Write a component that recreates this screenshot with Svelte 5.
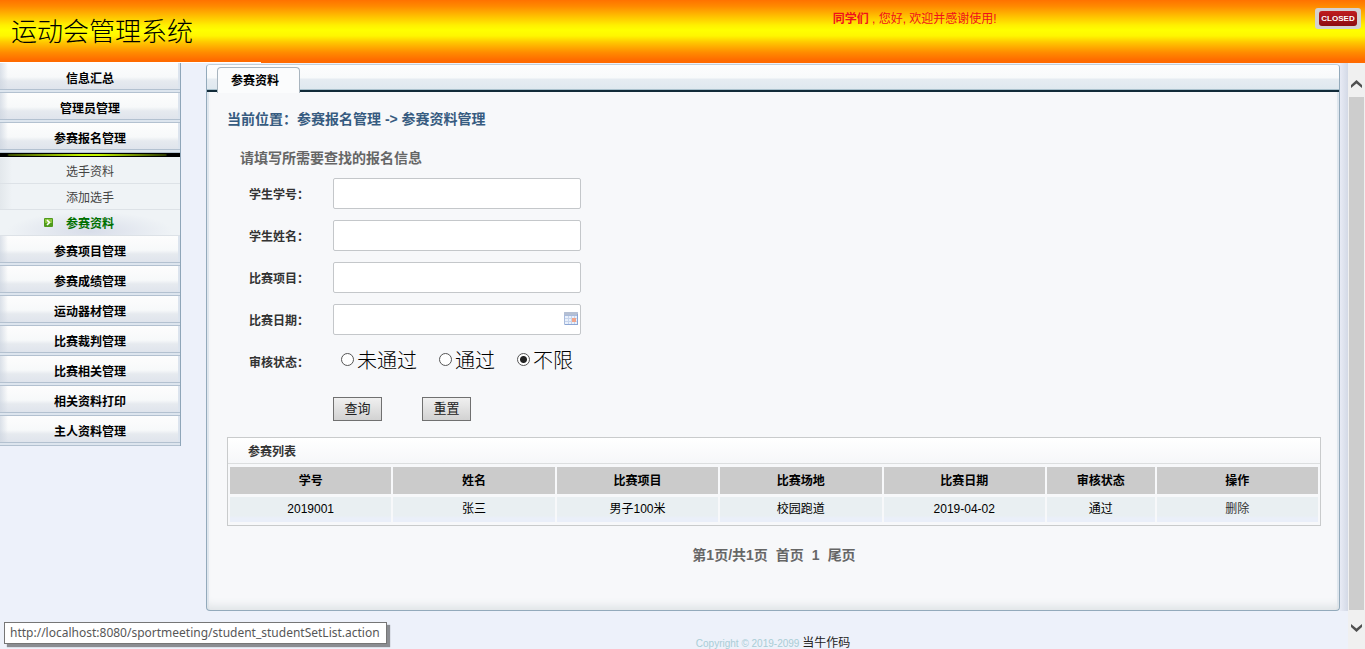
<script lang="ts">
	type MenuItem = { label: string; children?: string[] };

	const menu: MenuItem[] = [
		{ label: '信息汇总' },
		{ label: '管理员管理' },
		{ label: '参赛报名管理', children: ['选手资料', '添加选手', '参赛资料'] },
		{ label: '参赛项目管理' },
		{ label: '参赛成绩管理' },
		{ label: '运动器材管理' },
		{ label: '比赛裁判管理' },
		{ label: '比赛相关管理' },
		{ label: '相关资料打印' },
		{ label: '主人资料管理' }
	];
	const current = '参赛资料';

	const columns = [
		{ label: '学号', width: 15 },
		{ label: '姓名', width: 15 },
		{ label: '比赛项目', width: 15 },
		{ label: '比赛场地', width: 15 },
		{ label: '比赛日期', width: 15 },
		{ label: '审核状态', width: 10 },
		{ label: '操作', width: 15 }
	];
	const rows = [['2019001', '张三', '男子100米', '校园跑道', '2019-04-02', '通过']];

	const states = ['未通过', '通过', '不限'];

	let number = '';
	let name = '';
	let project = '';
	let date = '';
	let state = '不限';

	function reset() {
		number = name = project = date = '';
		state = '不限';
	}
</script>

<div class="page">
	<header>
		<h1>运动会管理系统</h1>
		<p><b>同学们</b> , 您好, 欢迎并感谢使用!</p>
		<button type="button" class="closed"><span>CLOSED</span></button>
	</header>

	<div class="body">
		<nav>
			{#each menu as item}
				<a class="item" href="#menu">{item.label}</a>
				{#if item.children}
					<div class="bar"></div>
					{#each item.children as child}
						<a class="child" class:selected={child === current} href="#menu">
							{#if child === current}
								<svg viewBox="0 0 9 9" width="9" height="9" aria-hidden="true">
									<rect width="9" height="9" rx="1" fill="#4f9a1c" />
									<rect x="1" y="1" width="7" height="4" fill="#8cc63e" />
									<path d="M3 2l2.5 2.5L3 7" fill="none" stroke="#fff" stroke-width="1.6" />
								</svg>
							{/if}
							{child}
						</a>
					{/each}
				{/if}
			{/each}
		</nav>

		<div class="content">
			<main>
				<div class="tabs"><a href="#tab">参赛资料</a></div>
				<div class="inner">
					<h2>当前位置：参赛报名管理 -&gt; 参赛资料管理</h2>
					<form on:submit|preventDefault>
						<h3>请填写所需要查找的报名信息</h3>
						<div class="row">
							<label for="number">学生学号：</label>
							<input type="text" id="number" bind:value={number} />
						</div>
						<div class="row">
							<label for="name">学生姓名：</label>
							<input type="text" id="name" bind:value={name} />
						</div>
						<div class="row">
							<label for="project">比赛项目：</label>
							<input type="text" id="project" bind:value={project} />
						</div>
						<div class="row">
							<label for="date">比赛日期：</label>
							<div class="date">
								<input type="text" id="date" bind:value={date} />
								<svg viewBox="0 0 14 13" width="14" height="13" aria-hidden="true">
									<rect width="14" height="13" rx="1" fill="#a9bbdc" />
									<rect width="14" height="3" rx="1" fill="#b4bfd3" />
									<path d="M1 4h12v8H1z" fill="#e9f0fb" />
									<path d="M1 6.5h12M1 9.5h12M4.5 4v8M7.5 4v8M10.5 4v8" stroke="#c6d4ec" />
									<rect x="8" y="6" width="4" height="4" fill="#f0a58c" />
									<path d="M13.5 2v11M1 12.5h13" stroke="#8ba5d4" />
								</svg>
							</div>
						</div>
						<div class="row" role="radiogroup" aria-labelledby="state">
							<span class="label" id="state">审核状态：</span>
							<div class="radios">
								{#each states as option}
									<label>
										<input type="radio" name="state" value={option} bind:group={state} />
										{option}
									</label>
								{/each}
							</div>
						</div>
						<div class="actions">
							<button type="submit">查询</button>
							<button type="button" on:click={reset}>重置</button>
						</div>
					</form>

					<section class="list">
						<h4>参赛列表</h4>
						<table>
							<thead>
								<tr>
									{#each columns as column}
										<th style={`width: ${column.width}%`}>{column.label}</th>
									{/each}
								</tr>
							</thead>
							<tbody>
								{#each rows as row}
									<tr>
										{#each row as cell}
											<td>{cell}</td>
										{/each}
										<td><a href="#delete">删除</a></td>
									</tr>
								{/each}
							</tbody>
						</table>
					</section>

					<div class="pager">
						<span>第1页/共1页</span>
						<a href="#first">首页</a>
						<a href="#1">1</a>
						<a href="#last">尾页</a>
					</div>
				</div>
			</main>
			<footer>Copyright © 2019-2099 <a href="#home">当牛作码</a></footer>
		</div>

		<div class="scrollbar">
			<button type="button" class="up" aria-label="向上滚动">
				<svg viewBox="0 0 11 8" width="11" height="8"><path d="M0 8V5l5.5-5L11 5v3L5.5 3.500z" /></svg>
			</button>
			<div class="thumb"></div>
			<button type="button" class="down" aria-label="向下滚动">
				<svg viewBox="0 0 11 8" width="11" height="8"><path d="M0 0v3l5.5 5L11 3V0L5.5 4.500z" /></svg>
			</button>
		</div>
	</div>

	<div class="status">http://localhost:8080/sportmeeting/student_studentSetList.action</div>
</div>

<style>
	:global(body) {
		margin: 0;
		background: #edf1fa;
	}
	.page {
		position: relative;
		display: flex;
		flex-direction: column;
		height: 100vh;
		overflow: hidden;
		color: #000;
		font-family: 'Liberation Sans', 'Noto Sans CJK SC', sans-serif;
		font-size: 12px;
	}
	h1,
	h2,
	h3,
	h4,
	p {
		margin: 0;
	}
	a {
		color: inherit;
		text-decoration: none;
	}
	input,
	button {
		box-sizing: border-box;
		margin: 0;
		font-family: inherit;
	}

	header {
		display: flex;
		flex: none;
		align-items: flex-start;
		height: 63px;
		background:
			linear-gradient(#fff, #fff) 0 100% / 261px 1px no-repeat,
			linear-gradient(
				#ff7200 0,
				#ff8a00 10%,
				#ffc400 27%,
				#fff000 40%,
				#ffff00 48%,
				#fff600 57%,
				#ffc800 67%,
				#ff8c00 83%,
				#ff6c00 95%,
				#ff6a00
			);
	}
	h1 {
		box-sizing: border-box;
		flex: 0 0 61%;
		padding: 12px 0 0 11px;
		font-family: KaiTi, 'Noto Sans CJK SC', sans-serif;
		font-size: 26px;
		font-weight: 300;
		line-height: 36px;
	}
	header p {
		flex: 1;
		padding-top: 9px;
		color: #f00f1c;
		line-height: 20px;
	}
	.closed {
		width: 46px;
		height: 21px;
		margin: 8px 4px 0 0;
		padding: 3px 4px;
		border: 0;
		border-radius: 3px;
		background: #d3d1d1;
	}
	.closed span {
		display: block;
		border-radius: 3px;
		background: linear-gradient(#c01c1f, #8c0c10);
		color: #fff;
		font-size: 8px;
		font-weight: 700;
		line-height: 15px;
	}

	.body {
		display: flex;
		flex: 1;
		align-items: flex-start;
		min-height: 0;
	}
	nav {
		flex: none;
		width: 180px;
		border-right: 1px solid #8fa6b9;
		background: #eff3f6;
		text-align: center;
	}
	.item {
		display: block;
		height: 30px;
		background:
			linear-gradient(#b3c1d0, #b3c1d0) 0 26px / 100% 1px no-repeat,
			linear-gradient(#dde5ee, #dde5ee) 0 27px / 100% 2px no-repeat,
			linear-gradient(#b3c1d0, #b3c1d0) 0 29px / 100% 1px no-repeat,
			linear-gradient(#dce4ee, #dce4ee) 100% 0 / 2px 100% no-repeat,
			linear-gradient(90deg, rgba(205, 213, 224, 0.7), transparent 8px),
			linear-gradient(#fdfdfd, #f7f9fa 14px, #e6eaef 18px, #dfe4ec 26px);
		font-weight: 700;
		line-height: 32px;
	}
	.bar {
		box-sizing: border-box;
		height: 4px;
		margin-bottom: 1px;
		border-top: 1px solid #000;
		border-bottom: 1px solid #000;
		background: linear-gradient(90deg, #000 4%, #3b4d00 5%, #c4f500 45%, #c4f500 55%, #2c3a00 92%, #000 93%);
	}
	.child {
		position: relative;
		display: block;
		box-sizing: border-box;
		height: 26px;
		border-bottom: 1px solid #dde2e7;
		background: linear-gradient(90deg, #e3e8ec, #eff3f6 12px);
		color: #444;
		line-height: 28px;
	}
	.child.selected {
		background: radial-gradient(ellipse at 50% 85%, #d8dde9, #eff3f6 65%);
		color: #007000;
		font-weight: 700;
	}
	.child svg {
		position: absolute;
		top: 8px;
		left: 44px;
	}

	.content {
		flex: 1;
		padding: 1px 8px 0 25px;
		background: linear-gradient(90deg, #e8ebf5, #d3d9e6) right 0 top 0 / 8px 548px no-repeat;
	}
	main {
		border: 1px solid #93aabb;
		border-top-color: #c3d0da;
		border-radius: 4px;
		background: #f7f8fa;
		box-shadow: inset 0 -8px 8px -4px #dfe3e6, inset 2px 0 #dfe7ef, inset -2px 0 #dfe7ef;
	}
	.tabs {
		display: flex;
		height: 25px;
		padding: 0 10px;
		border-bottom: 2px solid #122b39;
		border-radius: 3px 3px 0 0;
		background: linear-gradient(#fdfdfe, #f8fafb 13px, #e6ecf2 14px, #dfe8ef 24px, #a9c0cc 24px);
	}
	.tabs a {
		height: 25px;
		margin-top: 2px;
		padding: 0 20px 0 13px;
		border: 1px solid #a9b5bf;
		border-bottom: 0;
		border-radius: 4px 4px 0 0;
		background: #fbfcfd;
		font-weight: 700;
		line-height: 26px;
	}
	.inner {
		padding: 17px 18px 45px 20px;
	}
	h2 {
		color: #365b80;
		font-size: 14px;
		line-height: 20px;
	}
	form {
		padding: 19px 0 16px 13px;
	}
	h3 {
		margin-bottom: 10px;
		color: #666;
		font-size: 14px;
		line-height: 20px;
	}
	.row {
		display: flex;
		align-items: center;
		height: 31px;
		margin-bottom: 11px;
		padding-left: 9px;
	}
	.row > label,
	.label {
		width: 84px;
		color: #333;
		font-weight: 700;
	}
	.row input[type='text'] {
		width: 248px;
		height: 31px;
		padding: 0 8px;
		border: 1px solid #c4c7ca;
		border-radius: 2px;
		background: #fff;
	}
	.date {
		position: relative;
	}
	.date svg {
		position: absolute;
		top: 8px;
		right: 3px;
	}
	.radios {
		display: flex;
		gap: 22px;
		padding: 0 0 4px 8px;
		font-family: SimSun, 'Noto Sans CJK SC', sans-serif;
		font-size: 20px;
		font-weight: 300;
		line-height: 28px;
	}
	.radios label {
		display: flex;
		align-items: center;
		gap: 3px;
	}
	.radios input {
		width: 13px;
		height: 13px;
		border: 1px solid #555;
		border-radius: 50%;
		background: #fff;
		appearance: none;
	}
	.radios input:checked {
		background: radial-gradient(circle, #222 3px, #fff 4px);
	}
	.actions {
		display: flex;
		gap: 40px;
		padding: 9px 0 0 93px;
	}
	.actions button {
		min-width: 49px;
		height: 24px;
		padding: 0 10px;
		border: 1px solid #707070;
		background: linear-gradient(#f0f0f0, #d2d2d2);
		color: #222;
		font-size: 13px;
		line-height: 22px;
	}

	.list {
		border: 1px solid #c9cbcc;
	}
	h4 {
		height: 25px;
		padding-left: 20px;
		border-bottom: 1px solid #dcdedf;
		background: linear-gradient(#fff, #f6f7f9);
		color: #333;
		line-height: 28px;
	}
	table {
		width: 100%;
		border-spacing: 2px 3px;
		table-layout: fixed;
		text-align: center;
	}
	th,
	td {
		padding: 0;
	}
	th {
		height: 27px;
		background: #cbcbcb;
		line-height: 26px;
	}
	td {
		height: 25px;
		background: linear-gradient(#e9eff2 75%, #eaeff9 85%);
		line-height: 25px;
	}
	td a {
		color: #333;
	}
	.pager {
		display: flex;
		justify-content: center;
		gap: 8px;
		padding-top: 19px;
		color: #666;
		font-size: 14px;
		font-weight: 700;
		line-height: 20px;
	}
	footer {
		padding-top: 22px;
		color: #a9cdd6;
		font-size: 10px;
		line-height: 20px;
		text-align: center;
	}
	footer a {
		color: #222;
		font-size: 12px;
	}

	.scrollbar {
		display: flex;
		flex: none;
		flex-direction: column;
		align-self: stretch;
		width: 17px;
		background: #f0f0f0;
	}
	.scrollbar button {
		display: flex;
		align-items: center;
		justify-content: center;
		padding: 0;
		border: 0;
		background: none;
	}
	.scrollbar path {
		fill: #505050;
	}
	.scrollbar .up {
		height: 34px;
		padding-top: 8px;
	}
	.scrollbar .down {
		height: 39px;
		padding-bottom: 4px;
	}
	.thumb {
		flex: 1;
		margin: 0 1px;
		background: #cdcdcd;
	}

	.status {
		position: absolute;
		bottom: 5px;
		left: 4px;
		padding: 0 6px 0 5px;
		border: 1px solid #767676;
		background: #fff;
		box-shadow: 3px 3px 1px #8b8d92;
		color: #575757;
		font-family: 'Noto Sans', 'Open Sans', sans-serif;
		font-size: 12px;
		line-height: 20px;
	}
</style>
